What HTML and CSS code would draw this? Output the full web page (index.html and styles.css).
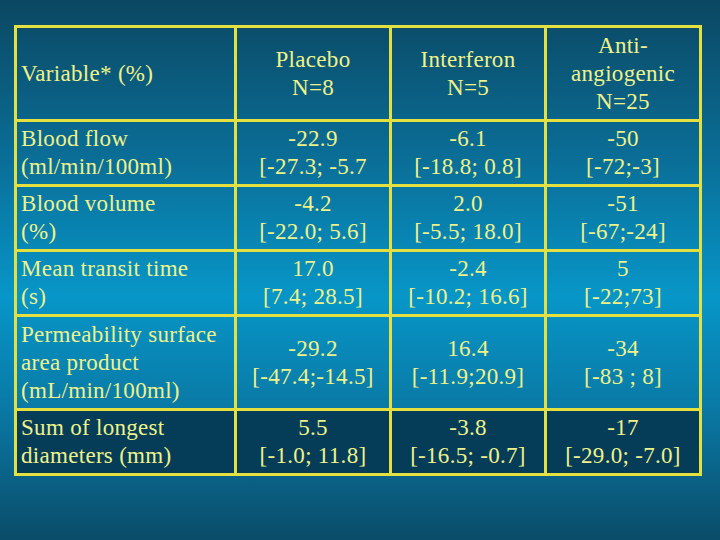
FILE: index.html
```html
<!DOCTYPE html>
<html>
<head>
<meta charset="utf-8">
<link rel="stylesheet" href="styles.css">
</head>
<body>
<div class="slide">
<table class="data">
  <colgroup>
    <col class="c-var"><col class="c-num"><col class="c-num"><col class="c-num">
  </colgroup>
  <tr class="r-head">
    <td class="lab">Variable* (%)</td>
    <td>Placebo<br>N=8</td>
    <td>Interferon<br>N=5</td>
    <td>Anti-<br>angiogenic<br>N=25</td>
  </tr>
  <tr class="r-std">
    <td class="lab">Blood flow<br>(ml/min/100ml)</td>
    <td>-22.9<br>[-27.3; -5.7</td>
    <td>-6.1<br>[-18.8; 0.8]</td>
    <td>-50<br>[-72;-3]</td>
  </tr>
  <tr class="r-std">
    <td class="lab">Blood volume<br>(%)</td>
    <td>-4.2<br>[-22.0; 5.6]</td>
    <td>2.0<br>[-5.5; 18.0]</td>
    <td>-51<br>[-67;-24]</td>
  </tr>
  <tr class="r-std">
    <td class="lab">Mean transit time<br>(s)</td>
    <td>17.0<br>[7.4; 28.5]</td>
    <td>-2.4<br>[-10.2; 16.6]</td>
    <td>5<br>[-22;73]</td>
  </tr>
  <tr class="r-tall">
    <td class="lab">Permeability surface<br>area product<br>(mL/min/100ml)</td>
    <td>-29.2<br>[-47.4;-14.5]</td>
    <td>16.4<br>[-11.9;20.9]</td>
    <td>-34<br>[-83 ; 8]</td>
  </tr>
  <tr class="r-std r-dark">
    <td class="lab">Sum of longest<br>diameters (mm)</td>
    <td>5.5<br>[-1.0; 11.8]</td>
    <td>-3.8<br>[-16.5; -0.7]</td>
    <td>-17<br>[-29.0; -7.0]</td>
  </tr>
</table>
</div>
</body>
</html>
```
FILE: styles.css
```css
html, body {
  margin: 0;
  padding: 0;
}
body {
  width: 720px;
  height: 540px;
  overflow: hidden;
  background: linear-gradient(to bottom, #0b4762 0%, #0a6f98 30%, #0796c8 55%, #0a7aa6 75%, #0a4c69 100%);
  font-family: "Liberation Serif", "Times New Roman", serif;
  color: #eef28a;
}
.slide {
  padding: 25px 0 0 14px;
}
.data {
  border-collapse: collapse;
  border: 3px solid #e4e040;
  font-size: 23px;
  line-height: 28px;
  letter-spacing: 0.3px;
}
.data td {
  border: 3px solid #e4e040;
  text-align: center;
  vertical-align: middle;
  padding: 0 2px;
  white-space: nowrap;
}
.data td.lab {
  text-align: left;
  padding-left: 4px;
}
.c-var { width: 220px; }
.c-num { width: 155px; }
.r-head { height: 94px; }
.r-std { height: 65px; }
.r-tall { height: 94px; }
.r-dark td { background: #053d58; }
```
